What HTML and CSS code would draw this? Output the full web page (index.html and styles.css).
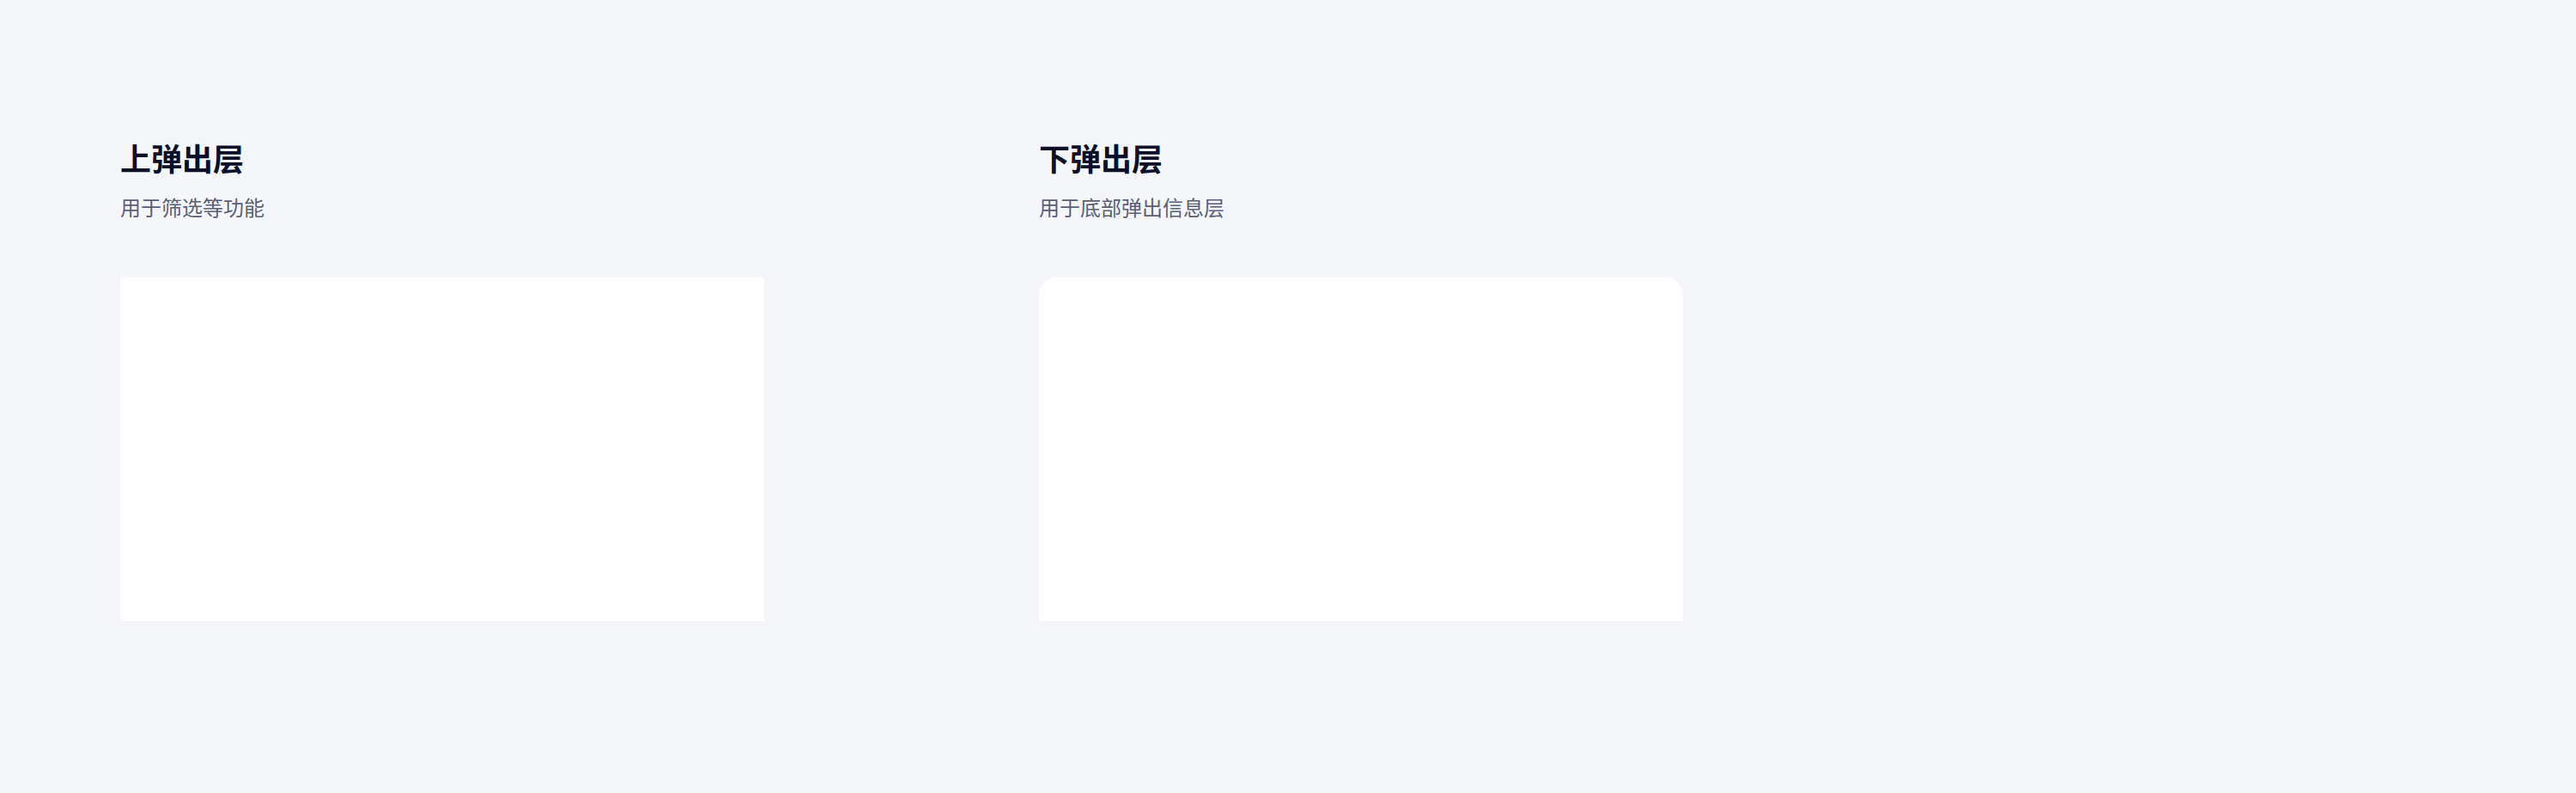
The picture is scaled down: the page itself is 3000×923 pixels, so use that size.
FILE: index.html
```html
<!DOCTYPE html>
<html lang="zh">
<head>
<meta charset="utf-8">
<title>弹出层</title>
<link rel="stylesheet" href="styles.css">
</head>
<body>
<main class="page">
  <section class="demo">
    <h2 class="demo-title">上弹出层</h2>
    <p class="demo-desc">用于筛选等功能</p>
    <div class="panel panel-top"></div>
  </section>
  <section class="demo">
    <h2 class="demo-title">下弹出层</h2>
    <p class="demo-desc">用于底部弹出信息层</p>
    <div class="panel panel-bottom"></div>
  </section>
</main>
</body>
</html>
```
FILE: styles.css
```css
html, body {
  margin: 0;
  padding: 0;
  background: #f5f6fa;
}
body {
  font-family: "Noto Sans CJK SC", "Noto Sans", sans-serif;
  min-height: 923px;
}
.page {
  display: flex;
  gap: 320px;
  padding: 158px 140px 0;
}
.demo {
  width: 750px;
  display: flex;
  flex-direction: column;
}
.demo-title {
  margin: 0;
  font-size: 36px;
  line-height: 50px;
  font-weight: 600;
  color: #0b0f28;
}
.demo-desc {
  margin: 16px 0 0;
  font-size: 24px;
  line-height: 34px;
  color: #5b5f73;
}
.panel {
  margin-top: 65px;
  height: 400px;
  background: #ffffff;
}
.panel-bottom {
  border-radius: 20px 20px 0 0;
}
```
